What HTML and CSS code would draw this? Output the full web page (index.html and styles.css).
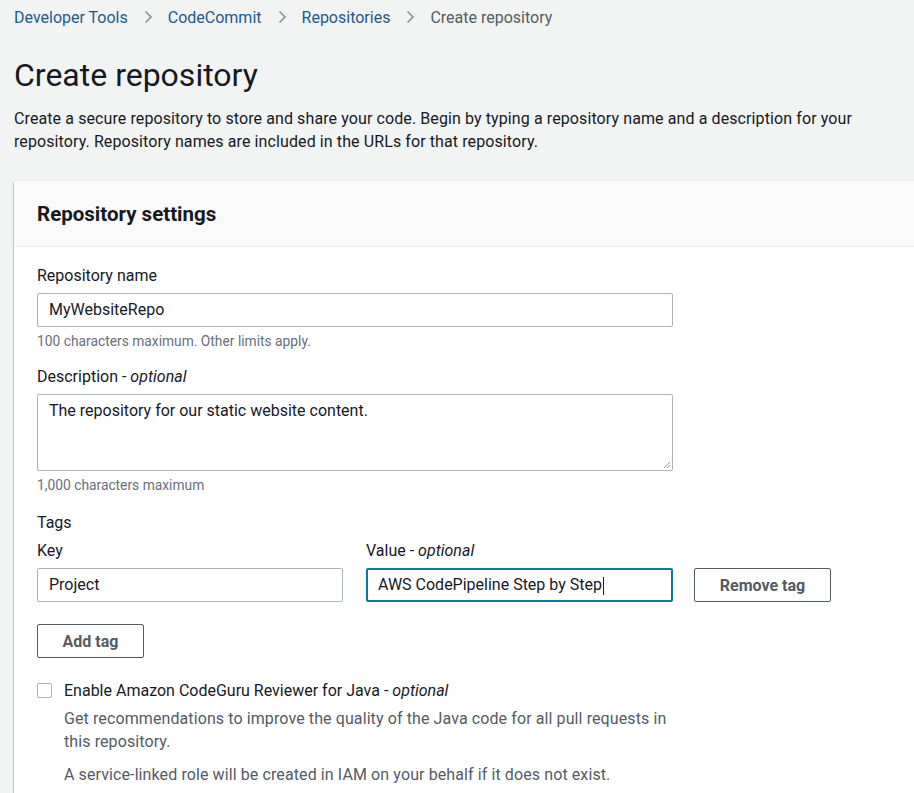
FILE: index.html
```html
<!DOCTYPE html>
<html lang="en">
<head>
<meta charset="utf-8">
<title>Create repository</title>
<link rel="stylesheet" href="styles.css">
</head>
<body>
<div class="page">
  <nav class="crumbs">
    <a href="#">Developer Tools</a>
    <svg class="chev" width="16" height="16" viewBox="0 0 16 16"><path d="M5.5 2.5 L11 8 L5.5 13.5" fill="none" stroke="#8c9393" stroke-width="1.6"/></svg>
    <a href="#">CodeCommit</a>
    <svg class="chev" width="16" height="16" viewBox="0 0 16 16"><path d="M5.5 2.5 L11 8 L5.5 13.5" fill="none" stroke="#8c9393" stroke-width="1.6"/></svg>
    <a href="#">Repositories</a>
    <svg class="chev" width="16" height="16" viewBox="0 0 16 16"><path d="M5.5 2.5 L11 8 L5.5 13.5" fill="none" stroke="#8c9393" stroke-width="1.6"/></svg>
    <span class="current">Create repository</span>
  </nav>
  <h1 class="title">Create repository</h1>
  <p class="intro">Create a secure repository to store and share your code. Begin by typing a repository name and a description for your repository. Repository names are included in the URLs for that repository.</p>

  <section class="card">
    <header class="card-head"><h2>Repository settings</h2></header>
    <div class="card-body">
      <div class="field">
        <label class="label">Repository name</label>
        <div class="input wide">MyWebsiteRepo</div>
        <div class="hint">100 characters maximum. Other limits apply.</div>
      </div>
      <div class="field">
        <label class="label">Description - <i>optional</i></label>
        <div class="input wide area">The repository for our static website content.
          <svg class="grip" width="8" height="8" viewBox="0 0 8 8"><path d="M7 1 L1 7 M7 4 L4 7" stroke="#9aa0a0" stroke-width="1"/></svg>
        </div>
        <div class="hint">1,000 characters maximum</div>
      </div>
      <div class="tags">
        <div class="label tags-title">Tags</div>
        <div class="tag-row">
          <div class="tag-col key">
            <label class="label">Key</label>
            <div class="input">Project</div>
          </div>
          <div class="tag-col value">
            <label class="label">Value - <i>optional</i></label>
            <div class="input focus">AWS CodePipeline Step by Step<span class="caret"></span></div>
          </div>
          <button class="btn remove">Remove tag</button>
        </div>
        <button class="btn add">Add tag</button>
      </div>
      <div class="check">
        <span class="box"></span>
        <div class="check-text">
          <div class="check-label">Enable Amazon CodeGuru Reviewer for Java - <i>optional</i></div>
          <p class="check-desc">Get recommendations to improve the quality of the Java code for all pull requests in this repository.</p>
          <p class="check-desc">A service-linked role will be created in IAM on your behalf if it does not exist.</p>
        </div>
      </div>
    </div>
  </section>
</div>
</body>
</html>
```
FILE: styles.css
```css
* { box-sizing: border-box; }
html, body { margin: 0; padding: 0; }
body {
  background: #f2f3f3;
  font-family: Roboto, "Liberation Sans", sans-serif;
  color: #16191f;
  width: 914px;
  height: 793px;
  overflow: hidden;
}
.page { padding: 6px 0 0 14px; }
.crumbs {
  display: flex;
  align-items: center;
  gap: 12px;
  font-size: 16px;
  height: 22px;
}
.crumbs a { color: #1d5a8c; text-decoration: none; }
.crumbs .current { color: #545b64; }
.chev { display: block; }
.title {
  margin: 27px 0 0 0;
  font-size: 32px;
  font-weight: 400;
  line-height: 40px;
  color: #16191f;
}
.intro {
  margin: 12px 0 0 0;
  font-size: 16px;
  letter-spacing: 0.1px;
  line-height: 23px;
  width: 870px;
  color: #16191f;
}
.card {
  margin-top: 28px;
  background: #fff;
  box-shadow: 0 1px 1px 0 rgba(0,28,36,.3), 1px 1px 1px 0 rgba(0,28,36,.15), -1px 1px 1px 0 rgba(0,28,36,.15);
  width: 920px;
  min-height: 620px;
}
.card-head {
  background: #fafafa;
  border-bottom: 1px solid #eaeded;
  height: 66px;
  display: flex;
  align-items: center;
  padding-left: 23px;
}
.card-head h2 { margin: 0; font-size: 20.5px; font-weight: 700; color: #16191f; }
.card-body { padding: 18px 23px 0 23px; }
.label { display: block; font-size: 16px; line-height: 22px; color: #16191f; }
.field { margin-bottom: 16px; }
.field .label { margin-bottom: 6px; }
.input {
  border: 1px solid #aab7b8;
  border-radius: 2px;
  background: #fff;
  height: 34px;
  padding: 0 11px;
  font-size: 16px;
  line-height: 32px;
  color: #16191f;
  position: relative;
}
.input.wide { width: 636px; }
.input.area { height: 77px; line-height: 22px; padding-top: 5px; }
.grip { position: absolute; right: 1px; bottom: 1px; }
.hint { font-size: 13.8px; color: #687078; margin-top: 5px; line-height: 18px; }
.tags { padding-top: 2px; }
.tags-title { margin-bottom: 6px; }
.tag-row { display: flex; align-items: flex-end; gap: 0; }
.tag-col .label { margin-bottom: 6px; }
.tag-col.key { width: 306px; margin-right: 23px; }
.tag-col.value { width: 307px; margin-right: 21px; }
.input.focus {
  border: 2px solid #0a7aa0;
  padding: 0 10px;
  line-height: 30px;
}
.caret { display: inline-block; width: 1px; height: 18px; background: #16191f; vertical-align: middle; margin-left: 1px; }
.btn {
  font-family: inherit;
  font-size: 16px;
  font-weight: 700;
  color: #545b64;
  background: #fff;
  border: 1px solid #545b64;
  border-radius: 2px;
  height: 34px;
  padding: 0 20px;
  cursor: pointer;
}
.btn.remove { width: 137px; }
.btn.add { margin-top: 22px; width: 107px; padding: 0; }
.check { display: flex; gap: 12px; margin-top: 21px; }
.box {
  width: 15px; height: 15px;
  border: 1px solid #aab7b8;
  border-radius: 2px;
  background: #fff;
  margin-top: 4px;
  flex: none;
}
.check-label { font-size: 16px; line-height: 23px; }
.check-desc { margin: 5px 0 0 0; font-size: 16px; letter-spacing: 0.1px; line-height: 23px; color: #545b64; width: 620px; }
.check-desc + .check-desc { margin-top: 10px; }
```
